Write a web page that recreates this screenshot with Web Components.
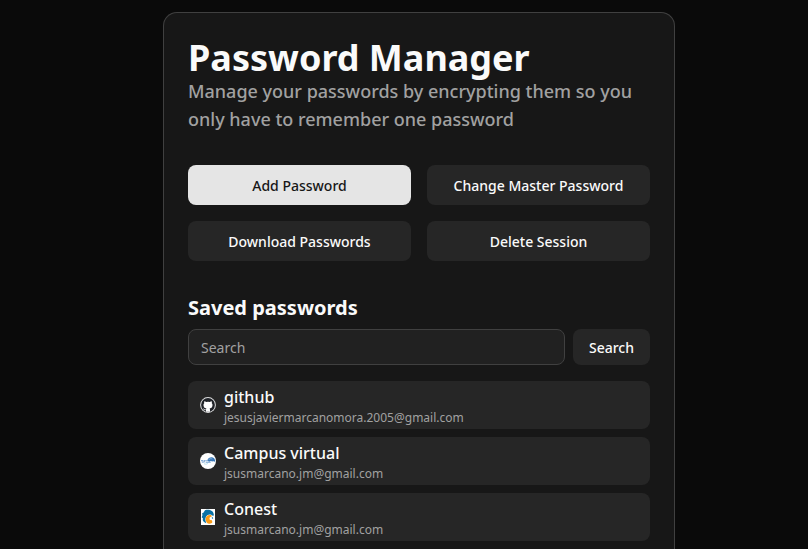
<!DOCTYPE html>
<html lang="en">
<head>
<meta charset="utf-8">
<title>Password Manager</title>
<style>
html, body { margin: 0; height: 100%; overflow: hidden; background: #0a0a0a; }
body { color: #fafafa; font-family: "Noto Sans", sans-serif; font-size: 16px; line-height: 24px; }
</style>
</head>
<body>
<password-app></password-app>
<script>
const define = (name, html) => {
  const template = document.createElement('template');
  template.innerHTML = html;
  customElements.define(name, class extends HTMLElement {
    constructor() {
      super();
      this.attachShadow({ mode: 'open' }).append(template.content.cloneNode(true));
    }
  });
};

define('pm-card', `
<style>
:host { display: flex; flex-direction: column; gap: 32px; box-sizing: border-box; width: 512px; height: 100%; padding: 24px 24px 0; background: #171717; border: 1px solid #404040; border-bottom: 0; border-radius: 14px 14px 0 0; }
</style><slot></slot>`);

define('pm-header', `
<style>
:host { display: block; }
h1 { margin: 0 0 -2px; font-size: 36px; line-height: 42px; font-weight: 700; }
p { margin: 0; font-size: 18px; line-height: 28px; font-weight: 500; color: #a1a1a1; }
</style><h1><slot name="title"></slot></h1><p><slot></slot></p>`);

define('pm-button', `
<style>
:host { display: flex; }
button { all: unset; box-sizing: border-box; flex: 1; height: 40px; padding: 2px 16px 0; display: flex; align-items: center; justify-content: center; border-radius: 8px; background: #262626; color: #fafafa; font-size: 14px; line-height: 20px; font-weight: 500; white-space: nowrap; }
:host([primary]) button { background: #e5e5e5; color: #171717; }
:host([compact]) button { height: 36px; }
</style><button><slot></slot></button>`);

define('pm-actions', `
<style>:host { display: grid; grid-template-columns: 1fr 1fr; gap: 16px; }</style><slot></slot>`);

define('pm-search', `
<style>
:host { display: flex; gap: 8px; }
input { all: unset; box-sizing: border-box; flex: 1; min-width: 0; height: 36px; padding: 4px 12px; border: 1px solid #404040; border-radius: 8px; background: #212121; color: #fafafa; font-size: 14px; line-height: 20px; }
input::placeholder { color: #a1a1a1; opacity: 1; }
</style><input type="text" placeholder="Search"><pm-button compact>Search</pm-button>`);

define('pm-section', `
<style>
:host { display: flex; flex-direction: column; }
h2 { margin: 0 0 6px; font-size: 20px; line-height: 30px; font-weight: 700; }
.list { display: flex; flex-direction: column; gap: 8px; margin-top: 16px; }
</style><h2><slot name="title"></slot></h2><pm-search></pm-search><div class="list"><slot></slot></div>`);

define('pm-entry', `
<style>
:host { display: flex; align-items: center; gap: 8px; box-sizing: border-box; height: 48px; padding: 0 12px; border-radius: 8px; background: #262626; }
.icon { width: 16px; height: 16px; flex: none; }
.name { font-size: 16px; line-height: 24px; font-weight: 500; }
.user { font-size: 12px; line-height: 18px; margin-bottom: -2px; color: #a1a1a1; }
</style><div class="icon"><slot name="icon"></slot></div>
<div><div class="name"><slot name="name"></slot></div><div class="user"><slot></slot></div></div>`);

define('icon-github', `
<style>:host, svg { display: block; width: 16px; height: 16px; }</style>
<svg viewBox="0 0 16 16"><circle cx="8" cy="8" r="7.900" fill="#dedfe0"/><circle cx="8" cy="8" r="6.900" fill="#202328"/>
<path fill="#fff" d="M6 14.800v-1.700c-1.700.4-2.200-.6-2.700-1.200-.3-.3-.5-.4-.2-.5.900-.1 1.200.8 1.700 1.100.4.200.8.1 1.200 0 .1-.4.2-.7.4-.9-2.100-.300-2.900-1.500-2.900-3.500 0-.8.2-1.400.7-1.900-.2-.7-.1-1.500.1-2 .7 0 1.400.4 1.900.8a7 7 0 0 1 3.600 0c.5-.4 1.200-.8 1.900-.8.2.500.3 1.300.1 2 .5.500.7 1.100.7 1.900 0 2-.8 3.200-2.900 3.500.3.300.4.700.4 1.400v1.800z"/></svg>`);

define('icon-campus', `
<style>:host, svg { display: block; width: 16px; height: 16px; }</style>
<svg viewBox="0 0 16 16"><circle cx="8" cy="8" r="8" fill="#fff"/>
<path d="M7.300 7.400C8 5 10 4 12 4.200c2 .2 3.300 1.800 3.200 4.700-1-.8-2-.8-3-.3-.8-.9-2-.9-3 .1z" fill="#3978b8"/>
<path d="M8.200 7.300c1.200-1.800 2.800-2 4.100-1.300" fill="none" stroke="#a9cde9" stroke-width=".6"/>
<path d="M1 7.700h2.300M1.800 9.100h1.900M4.200 7.500v1.900M4.200 7.700h1.500M5.700 9.200h5M6.300 7.600h1.200" stroke="#5f93ca" stroke-width=".9"/>
<path d="M4 10.700c1.500.8 3 .5 4-.4" fill="none" stroke="#a8dbe9" stroke-width=".8"/></svg>`);

define('icon-conest', `
<style>:host, svg { display: block; width: 16px; height: 16px; }</style>
<svg viewBox="0 0 16 16"><path fill="#fff" d="M1 0h14v16H1z"/>
<path fill="#0871a5" d="M5 1.300C7 .6 10 .6 11.800 2c1.500 1 2.100 2.600 2.100 4.500l-1.300.2C11.300 5.300 9 5 7.300 6.200 5.700 7.400 5.200 9.200 5.400 11.200l.8 3C4.200 13.500 3.100 12.500 2.700 10.800L3 9.500 1.700 8.300 2.500 6 2 4.500 3.400 3.800z"/>
<path fill="#f99b16" d="M9.800 5.900c-2.600 0-4.200 1.900-4.100 4.300.1 2.500 1.400 4.500 3.700 4.600 1.500 0 2.700-.6 3-1.700l-.7-2c-1.500.2-2.200-.6-2.200-1.600 0-1.200.8-1.900 2.300-2.100l-.5-1.300z"/>
<path fill="#0871a5" d="M11.700 8.600l1.200-.4.3 1.200-1.100.4z"/></svg>`);

define('password-app', `
<style>:host { display: block; box-sizing: border-box; height: 100%; padding: 12px 0 0 163px; }</style>
<pm-card>
  <pm-header><span slot="title">Password Manager</span>Manage your passwords by encrypting them so you only have to remember one password</pm-header>
  <pm-actions>
    <pm-button primary>Add Password</pm-button><pm-button>Change Master Password</pm-button>
    <pm-button>Download Passwords</pm-button><pm-button>Delete Session</pm-button>
  </pm-actions>
  <pm-section><span slot="title">Saved passwords</span>
    <pm-entry><icon-github slot="icon"></icon-github><span slot="name">github</span>jesusjaviermarcanomora.2005@gmail.com</pm-entry>
    <pm-entry><icon-campus slot="icon"></icon-campus><span slot="name">Campus virtual</span>jsusmarcano.jm@gmail.com</pm-entry>
    <pm-entry><icon-conest slot="icon"></icon-conest><span slot="name">Conest</span>jsusmarcano.jm@gmail.com</pm-entry>
  </pm-section>
</pm-card>`);
</script>
</body>
</html>
